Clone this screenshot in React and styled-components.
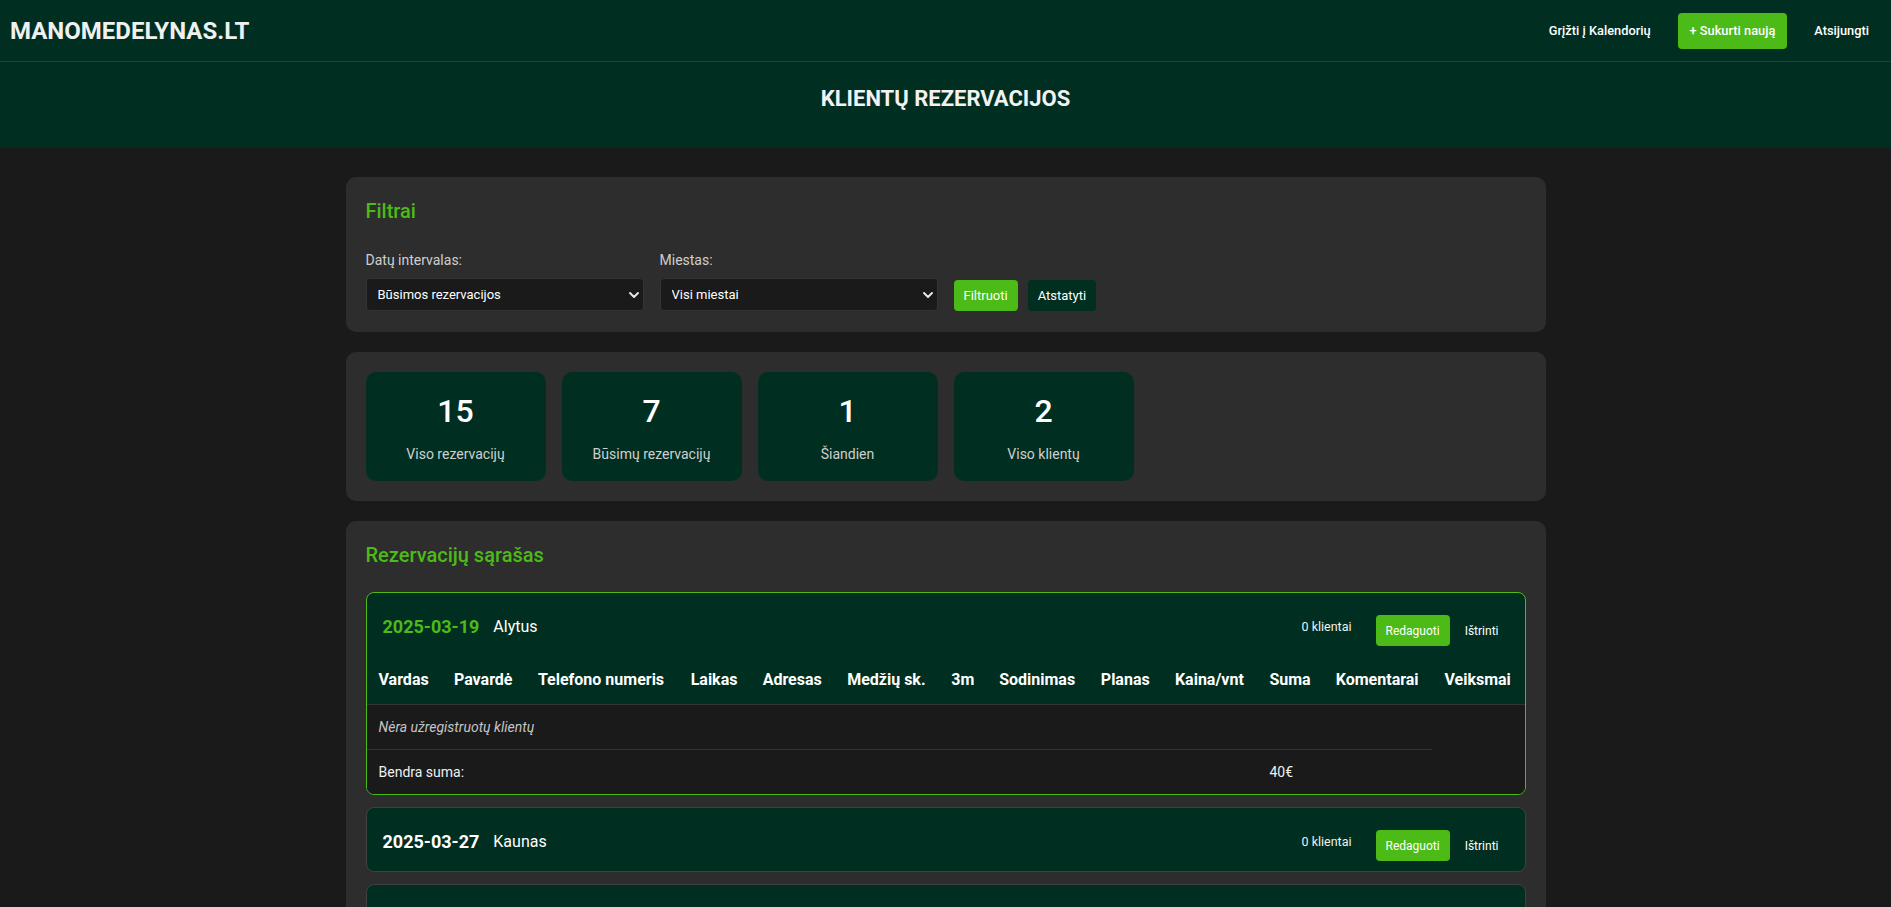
import React from 'react';
import styled, { createGlobalStyle } from 'styled-components';
import { ChevronDown } from 'lucide-react';

const GlobalStyle = createGlobalStyle`
  html { scrollbar-width: none; }
  body {
    margin: 0;
    background: #1a1a1a;
    color: #fff;
    font-family: Roboto, "Noto Sans", "Liberation Sans", sans-serif;
  }
  * { box-sizing: border-box; }
`

const Navbar = styled.nav`
  display: flex;
  align-items: center;
  justify-content: space-between;
  height: 62px;
  padding: 0 10px;
  background: #002f21;
  border-bottom: 1px solid rgba(255, 255, 255, 0.1);
`

const Logo = styled.div`
  font-size: 24px;
  font-weight: 700;
  color: #eef1ef;
`

const NavLinks = styled.div`
  display: flex;
  align-items: center;
  gap: 15px;
`

const NavLink = styled.a`
  display: flex;
  align-items: center;
  height: 36px;
  padding: 0 12px;
  border-radius: 4px;
  font-size: 12.8px;
  font-weight: 500;
  color: #fff;
  text-decoration: none;
  background: ${props => props.$primary ? "#4cbb17" : "transparent"};
`

const TitleBand = styled.header`
  background: #002f21;
  padding: 24px 0 37px;
  text-align: center;
`

const Title = styled.h1`
  margin: 0;
  font-size: 22px;
  line-height: 25px;
  font-weight: 700;
  color: #f2f2f2;
`

const Main = styled.main`
  max-width: 1200px;
  margin: 0 auto;
  padding: 29px 0 40px;
  display: flex;
  flex-direction: column;
  gap: 20px;
`

const Card = styled.section`
  background: #2d2d2d;
  border-radius: 10px;
  padding: 20px 20px ${props => props.$bottom || 20}px;
`

const CardTitle = styled.h2`
  margin: 0 0 ${props => props.$gap || 23}px;
  font-size: 20px;
  line-height: 28px;
  font-weight: 500;
  color: #4cbb17;
`

const FilterRow = styled.div`
  display: flex;
  align-items: flex-end;
  gap: 16px;
`

const FilterGroup = styled.div`
  display: flex;
  flex-direction: column;
  width: 278px;
`

const Label = styled.label`
  font-size: 14px;
  line-height: 20px;
  color: #cfcfcf;
  margin-bottom: 8px;
`

const SelectWrap = styled.div`
  position: relative;
  svg {
    position: absolute;
    right: 2px;
    top: 9px;
    pointer-events: none;
    color: #e6e6e6;
  }
`

const Select = styled.select`
  appearance: none;
  width: 100%;
  height: 33px;
  padding: 0 24px 0 11px;
  background: #1a1a1a;
  color: #fff;
  border: 1px solid #333;
  border-radius: 4px;
  font-family: inherit;
  font-size: 13px;
`

const ButtonGroup = styled.div`
  display: flex;
  gap: 10px;
`

const Button = styled.button`
  height: 31px;
  padding: 0 10px;
  border: none;
  border-radius: 4px;
  font-family: inherit;
  font-size: ${props => props.$small ? 12 : 13}px;
  font-weight: 400;
  color: #fff;
  cursor: pointer;
  margin-top: ${props => props.$small ? 8 : 0}px;
  background: ${props => props.$variant === "green" ? "#4cbb17" : props.$variant === "dark" ? "#002f21" : "transparent"};
`

const StatsGrid = styled.div`
  display: grid;
  grid-template-columns: repeat(auto-fill, minmax(180px, 1fr));
  gap: 16px;
`

const StatBox = styled.div`
  background: #002f21;
  border-radius: 10px;
  padding: 20px 10px 17px;
  text-align: center;
`

const StatNumber = styled.div`
  font-size: 32px;
  line-height: 38px;
  font-weight: 500;
  color: #fff;
  margin-bottom: 14px;
`

const StatLabel = styled.div`
  font-size: 14px;
  line-height: 20px;
  color: #cfcfcf;
`

const BlockList = styled.div`
  display: flex;
  flex-direction: column;
  gap: 12px;
`

const Block = styled.div`
  border: 1px solid ${props => props.$active ? "#4cbb17" : "#404040"};
  border-radius: 8px;
  overflow: hidden;
  background: #002f21;
`

const BlockHeader = styled.div`
  display: flex;
  align-items: center;
  justify-content: space-between;
  padding: 14px 16px 10px;
`

const DateInfo = styled.div`
  display: flex;
  align-items: center;
`

const DateText = styled.span`
  font-size: 18px;
  font-weight: 700;
  margin-right: 14px;
  color: ${props => props.$active ? "#4cbb17" : "#fff"};
`

const City = styled.span`
  font-size: 16px;
  color: #fff;
`

const Actions = styled.div`
  display: flex;
  align-items: center;
  gap: 5px;
`

const ClientCount = styled.span`
  font-size: 12.5px;
  color: #f0f0f0;
  margin-right: 19px;
`

const Table = styled.table`
  width: 100%;
  border-collapse: collapse;
  background: #1a1a1a;
`

const Th = styled.th`
  padding: 12px;
  text-align: left;
  font-size: 16px;
  line-height: 24px;
  font-weight: 700;
  color: #fff;
  white-space: nowrap;
  background: #002f21;
  border-bottom: 1px solid #333;
`

const Td = styled.td`
  padding: 12px;
  font-size: 14px;
  line-height: 20px;
  color: ${props => props.$muted ? "#c4c4c4" : "#f0f0f0"};
  font-style: ${props => props.$muted ? "italic" : "normal"};
  border-bottom: ${props => props.$bordered ? "1px solid #333" : "none"};
`

const columns = ["Vardas", "Pavardė", "Telefono numeris", "Laikas", "Adresas", "Medžių sk.", "3m", "Sodinimas", "Planas", "Kaina/vnt", "Suma", "Komentarai", "Veiksmai"];

const stats = [
  { value: 15, label: "Viso rezervacijų" },
  { value: 7, label: "Būsimų rezervacijų" },
  { value: 1, label: "Šiandien" },
  { value: 2, label: "Viso klientų" },
];

const reservations = [
  { date: "2025-03-19", city: "Alytus", clients: 0, total: "40€", active: true },
  { date: "2025-03-27", city: "Kaunas", clients: 0 },
  { date: "2025-04-02", city: "Vilnius", clients: 0 },
];

function ReservationBlock({ item }) {
  return (
    <Block $active={item.active}>
      <BlockHeader>
        <DateInfo>
          <DateText $active={item.active}>{item.date}</DateText>
          <City>{item.city}</City>
        </DateInfo>
        <Actions>
          <ClientCount>{item.clients} klientai</ClientCount>
          <Button $variant="green" $small>Redaguoti</Button>
          <Button $small>Ištrinti</Button>
        </Actions>
      </BlockHeader>
      {item.active && (
        <Table>
          <thead>
            <tr>{columns.map(c => <Th key={c}>{c}</Th>)}</tr>
          </thead>
          <tbody>
            <tr>
              <Td colSpan={12} $muted $bordered>Nėra užregistruotų klientų</Td>
            </tr>
            <tr>
              <Td colSpan={10}>Bendra suma:</Td>
              <Td>{item.total}</Td>
              <Td></Td>
              <Td></Td>
            </tr>
          </tbody>
        </Table>
      )}
    </Block>
  );
}

export default function App() {
  return (
    <>
      <GlobalStyle />
      <Navbar>
        <Logo>MANOMEDELYNAS.LT</Logo>
        <NavLinks>
          <NavLink href="#">Grįžti į Kalendorių</NavLink>
          <NavLink href="#" $primary>+ Sukurti naują</NavLink>
          <NavLink href="#">Atsijungti</NavLink>
        </NavLinks>
      </Navbar>
      <TitleBand>
        <Title>KLIENTŲ REZERVACIJOS</Title>
      </TitleBand>
      <Main>
        <Card $bottom={21}>
          <CardTitle $gap={25}>Filtrai</CardTitle>
          <FilterRow>
            <FilterGroup>
              <Label>Datų intervalas:</Label>
              <SelectWrap>
                <Select defaultValue="future">
                  <option value="future">Būsimos rezervacijos</option>
                  <option value="all">Visos rezervacijos</option>
                </Select>
                <ChevronDown size={16} strokeWidth={3} />
              </SelectWrap>
            </FilterGroup>
            <FilterGroup>
              <Label>Miestas:</Label>
              <SelectWrap>
                <Select defaultValue="all">
                  <option value="all">Visi miestai</option>
                </Select>
                <ChevronDown size={16} strokeWidth={3} />
              </SelectWrap>
            </FilterGroup>
            <ButtonGroup>
              <Button $variant="green">Filtruoti</Button>
              <Button $variant="dark">Atstatyti</Button>
            </ButtonGroup>
          </FilterRow>
        </Card>
        <Card>
          <StatsGrid>
            {stats.map(s => (
              <StatBox key={s.label}>
                <StatNumber>{s.value}</StatNumber>
                <StatLabel>{s.label}</StatLabel>
              </StatBox>
            ))}
          </StatsGrid>
        </Card>
        <Card>
          <CardTitle>Rezervacijų sąrašas</CardTitle>
          <BlockList>
            {reservations.map(r => <ReservationBlock key={r.date} item={r} />)}
          </BlockList>
        </Card>
      </Main>
    </>
  );
}
